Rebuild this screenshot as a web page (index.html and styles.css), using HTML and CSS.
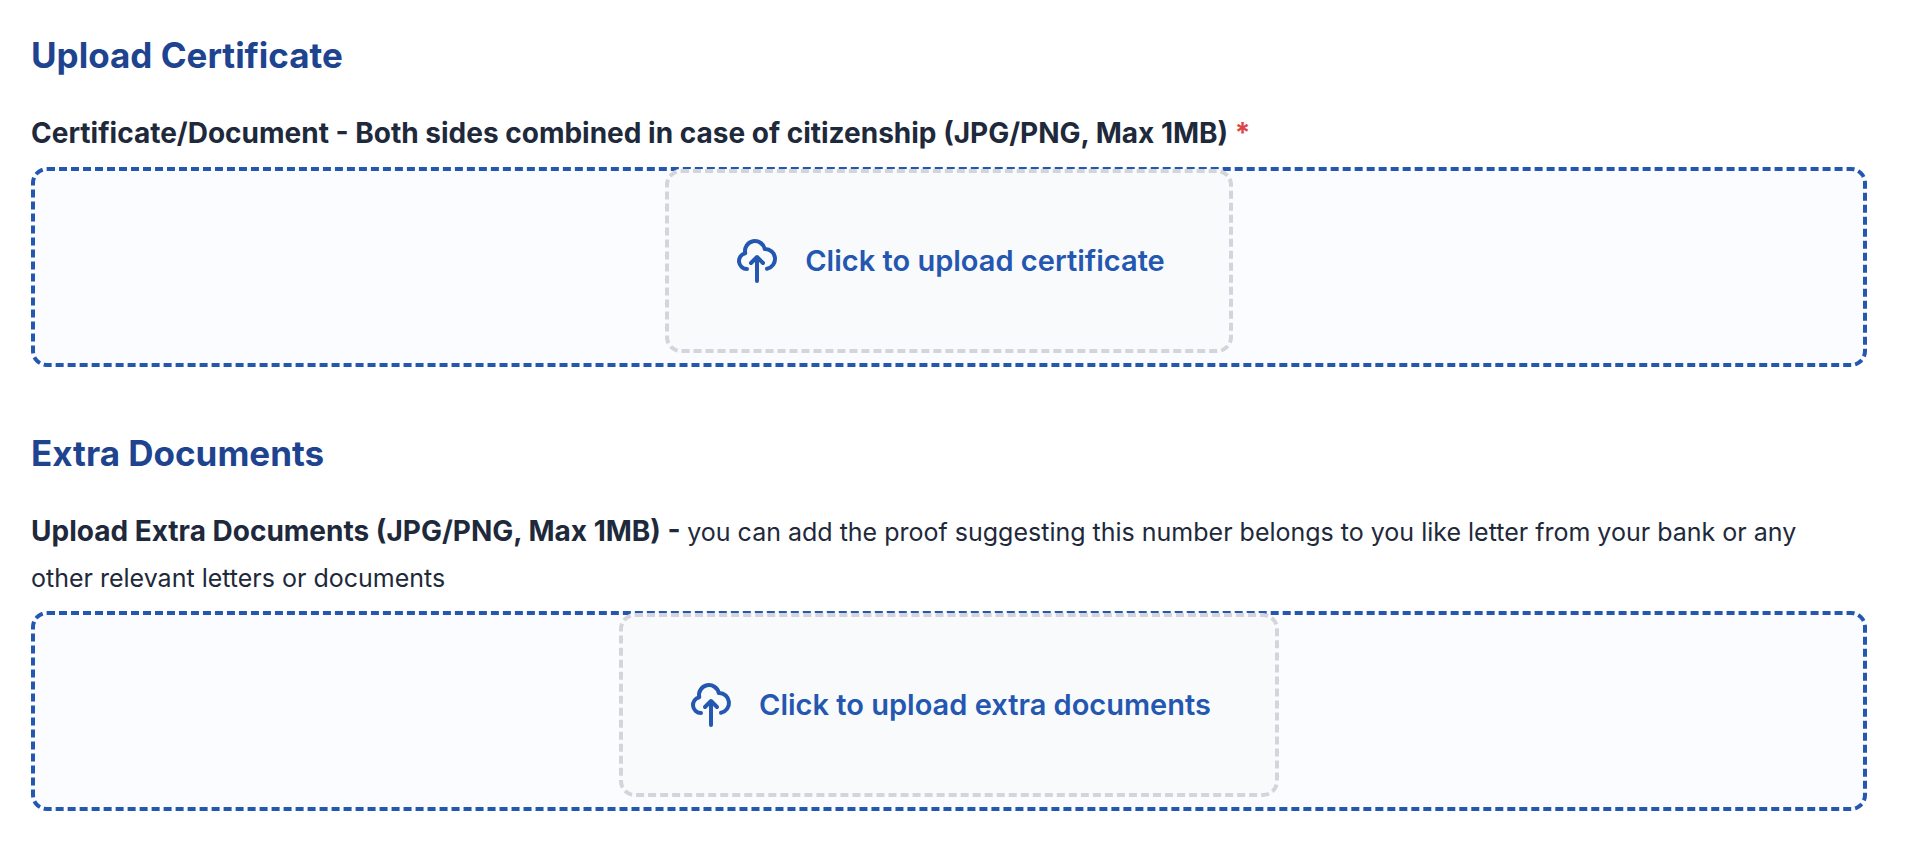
FILE: index.html
```html
<!DOCTYPE html>
<html lang="en">
<head>
  <meta charset="UTF-8">
  <meta name="viewport" content="width=device-width, initial-scale=1.0">
  <title>Upload Documents</title>
  <link rel="stylesheet" href="styles.css">
</head>
<body>

  <form class="upload-form">

    <!-- Certificate -->
    <section class="form-section">
      <h2>Upload Certificate</h2>
      <label class="field-label" for="certificate">Certificate/Document - Both sides combined in case of citizenship (JPG/PNG, Max 1MB) <span class="required">*</span></label>
      <div class="upload-area">
        <input type="file" id="certificate" class="file-input" accept=".jpg,.jpeg,.png" required>
        <label class="upload-label" for="certificate">
          <svg class="upload-icon" viewBox="0 0 24 24" aria-hidden="true">
            <path d="M7 16a4 4 0 01-.88-7.903A5 5 0 1115.9 6L16 6a5 5 0 011 9.9M15 13l-3-3m0 0l-3 3m3-3v12"/>
          </svg>
          <span>Click to upload certificate</span>
        </label>
      </div>
    </section>

    <!-- Extra documents -->
    <section class="form-section">
      <h2>Extra Documents</h2>
      <label class="field-label" for="extraDocuments">Upload Extra Documents (JPG/PNG, Max 1MB) - <span class="hint">you can add the proof suggesting this number belongs to you like letter from your bank or any other relevant letters or documents</span></label>
      <div class="upload-area">
        <input type="file" id="extraDocuments" class="file-input" accept=".jpg,.jpeg,.png" multiple>
        <label class="upload-label" for="extraDocuments">
          <svg class="upload-icon" viewBox="0 0 24 24" aria-hidden="true">
            <path d="M7 16a4 4 0 01-.88-7.903A5 5 0 1115.9 6L16 6a5 5 0 011 9.9M15 13l-3-3m0 0l-3 3m3-3v12"/>
          </svg>
          <span>Click to upload extra documents</span>
        </label>
      </div>
    </section>

  </form>

</body>
</html>
```

FILE: styles.css
```css
* {
  box-sizing: border-box;
}
body {
  margin: 0;
  font-family: Inter, "Liberation Sans", sans-serif;
  font-size: 28px;
  line-height: 46px;
  color: #1e293b;
  background-color: #fff;
}
.upload-form {
  display: flex;
  flex-direction: column;
  gap: 58px;
  padding: 27px 45px 40px 31px;
}
h2 {
  margin: 0 0 27px;
  font-size: 35px;
  font-weight: 700;
  line-height: 56px;
  color: #1e4490;
}
.field-label {
  display: block;
  margin-bottom: 11px;
  padding-right: 16px;
  font-weight: 700;
}
.required {
  color: #dc4646;
}
.hint {
  font-size: 25px;
  font-weight: 400;
  line-height: 40px;
}
.upload-area {
  display: flex;
  justify-content: center;
  padding-bottom: 10px;
  border: 4px dashed #2457b0;
  border-radius: 16px;
  background-color: #fbfcff;
}
.file-input {
  position: absolute;
  width: 1px;
  height: 1px;
  opacity: 0;
}
.upload-label {
  display: flex;
  align-items: center;
  gap: 24px;
  margin-top: -2px;
  padding: 64px;
  border: 4px dashed #d3d5da;
  border-radius: 16px;
  background-color: #f9fafc;
  font-size: 29px;
  font-weight: 600;
  line-height: 48px;
  color: #2457b0;
  cursor: pointer;
}
.upload-icon {
  width: 48px;
  height: 48px;
  fill: none;
  stroke: currentColor;
  stroke-width: 2;
  stroke-linecap: round;
  stroke-linejoin: round;
}
```
